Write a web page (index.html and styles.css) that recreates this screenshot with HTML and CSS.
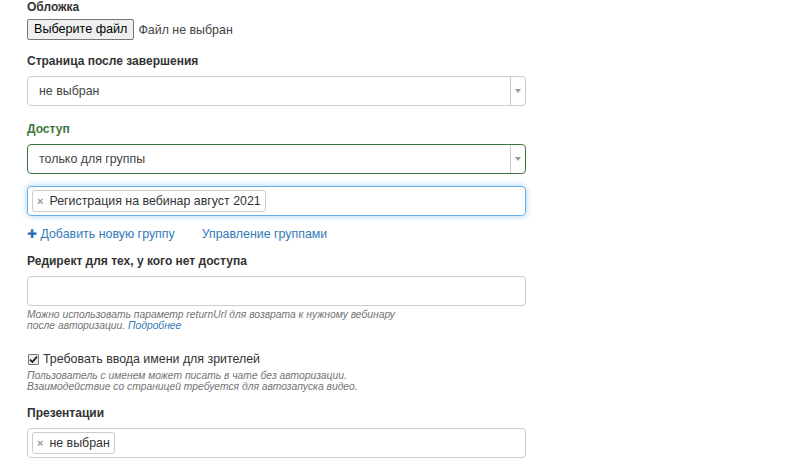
FILE: index.html
```html
<!DOCTYPE html>
<html lang="ru">
<head>
  <meta charset="UTF-8" />
  <link rel="stylesheet" href="styles.css">
</head>
<body>
  <form class="settings">
    <div class="form-group cover">
      <label class="control-label">Обложка</label>
      <div class="file-row">
        <span class="file-btn">Выберите файл</span>
        <span class="file-name">Файл не выбран</span>
      </div>
    </div>

    <div class="form-group">
      <label class="control-label">Страница после завершения</label>
      <div class="select-box">
        <span class="select-value">не выбран</span>
        <span class="select-arrow"></span>
      </div>
    </div>

    <div class="form-group has-success">
      <label class="control-label">Доступ</label>
      <div class="select-box">
        <span class="select-value">только для группы</span>
        <span class="select-arrow"></span>
      </div>
      <div class="tags-box focused">
        <span class="tag"><span class="tag-remove">×</span>Регистрация на вебинар август 2021</span>
      </div>
      <div class="group-links">
        <a href="#" class="link"><span class="plus">✚</span> Добавить новую группу</a>
        <a href="#" class="link">Управление группами</a>
      </div>
    </div>

    <div class="form-group">
      <label class="control-label">Редирект для тех, у кого нет доступа</label>
      <div class="text-input"></div>
      <p class="help">Можно использовать параметр returnUrl для возврата к нужному вебинару<br>после авторизации. <a href="#" class="help-link">Подробнее</a></p>
    </div>

    <div class="form-group check-group">
      <label class="check-label">
        <span class="checkbox">
          <svg width="9" height="9" viewBox="0 0 9 9"><path d="M1 4.6 L3.4 7 L8 1.6" fill="none" stroke="#222" stroke-width="1.8"/></svg>
        </span>
        Требовать ввода имени для зрителей
      </label>
      <p class="help">Пользователь с именем может писать в чате без авторизации.<br>Взаимодействие со страницей требуется для автозапуска видео.</p>
    </div>

    <div class="form-group">
      <label class="control-label">Презентации</label>
      <div class="tags-box">
        <span class="tag"><span class="tag-remove">×</span>не выбран</span>
      </div>
    </div>
  </form>
</body>
</html>
```

FILE: styles.css
```css
body {
  margin: 0;
  font-family: "Liberation Sans", Arial, sans-serif;
  font-size: 12.4px;
  line-height: 18px;
  color: #333;
  background: #fff;
}

.settings {
  width: 499px;
  padding: 0 0 0 27px;
}

.form-group {
  margin-bottom: 14px;
}

.cover {
  margin-top: -2px;
  margin-bottom: 12px;
}

.control-label {
  display: block;
  font-size: 12px;
  font-weight: bold;
  margin-bottom: 6px;
}

.cover .control-label {
  margin-bottom: 3px;
}

.has-success .control-label {
  color: #3c763d;
}

.file-row {
  display: flex;
  align-items: center;
  gap: 4px;
}

.file-btn {
  display: inline-block;
  height: 19px;
  line-height: 19px;
  padding: 0 6px;
  font-size: 12.6px;
  color: #000;
  background: #efefef;
  border: 1px solid #767676;
  border-radius: 2px;
}

.file-name {
  color: #444;
}

.select-box {
  display: flex;
  height: 28px;
  border: 1px solid #ccc;
  border-radius: 4px;
  align-items: stretch;
}

.has-success .select-box {
  border-color: #3c763d;
}

.select-value {
  flex: 1;
  line-height: 28px;
  padding-left: 11px;
  color: #444;
}

.select-arrow {
  width: 14px;
  border-left: 1px solid #ccc;
  position: relative;
}

.select-arrow::after {
  content: "";
  position: absolute;
  left: 4px;
  top: 12px;
  border-left: 3px solid transparent;
  border-right: 3px solid transparent;
  border-top: 4px solid #999;
}

.tags-box {
  display: flex;
  align-items: center;
  height: 28px;
  padding: 0 4px;
  border: 1px solid #ccc;
  border-radius: 4px;
}

.has-success .tags-box {
  margin-top: 12px;
}

.tags-box.focused {
  border-color: #66afe9;
  box-shadow: 0 0 6px rgba(102, 175, 233, 0.6);
}

.tag {
  display: inline-flex;
  align-items: center;
  height: 20px;
  padding: 0 4px;
  border: 1px solid #ccc;
  border-radius: 3px;
  background: #fff;
  color: #333;
  font-size: 12.4px;
}

.tag-remove {
  color: #999;
  font-weight: bold;
  font-size: 11px;
  margin-right: 6px;
}

.group-links {
  display: flex;
  gap: 27px;
  margin-top: 9px;
}

.has-success {
  margin-bottom: 9px;
}

.link {
  color: #337ab7;
  text-decoration: none;
}

.plus {
  font-size: 12px;
  color: #2a6ebb;
}

.text-input {
  height: 28px;
  border: 1px solid #ccc;
  border-radius: 4px;
}

.help {
  margin: 3px 0 0;
  font-size: 10.3px;
  line-height: 11px;
  font-style: italic;
  color: #737373;
}

.help-link {
  color: #337ab7;
  text-decoration: none;
}

.check-group {
  margin-top: 19px;
  margin-bottom: 12px;
}

.check-label {
  display: flex;
  align-items: center;
  gap: 4px;
  margin-left: 1px;
}

.checkbox {
  display: inline-flex;
  align-items: center;
  justify-content: center;
  width: 9px;
  height: 9px;
  border: 1px solid #777;
  background: #eee;
  border-radius: 1px;
}

.check-group .help {
  margin-top: 2px;
}
```
